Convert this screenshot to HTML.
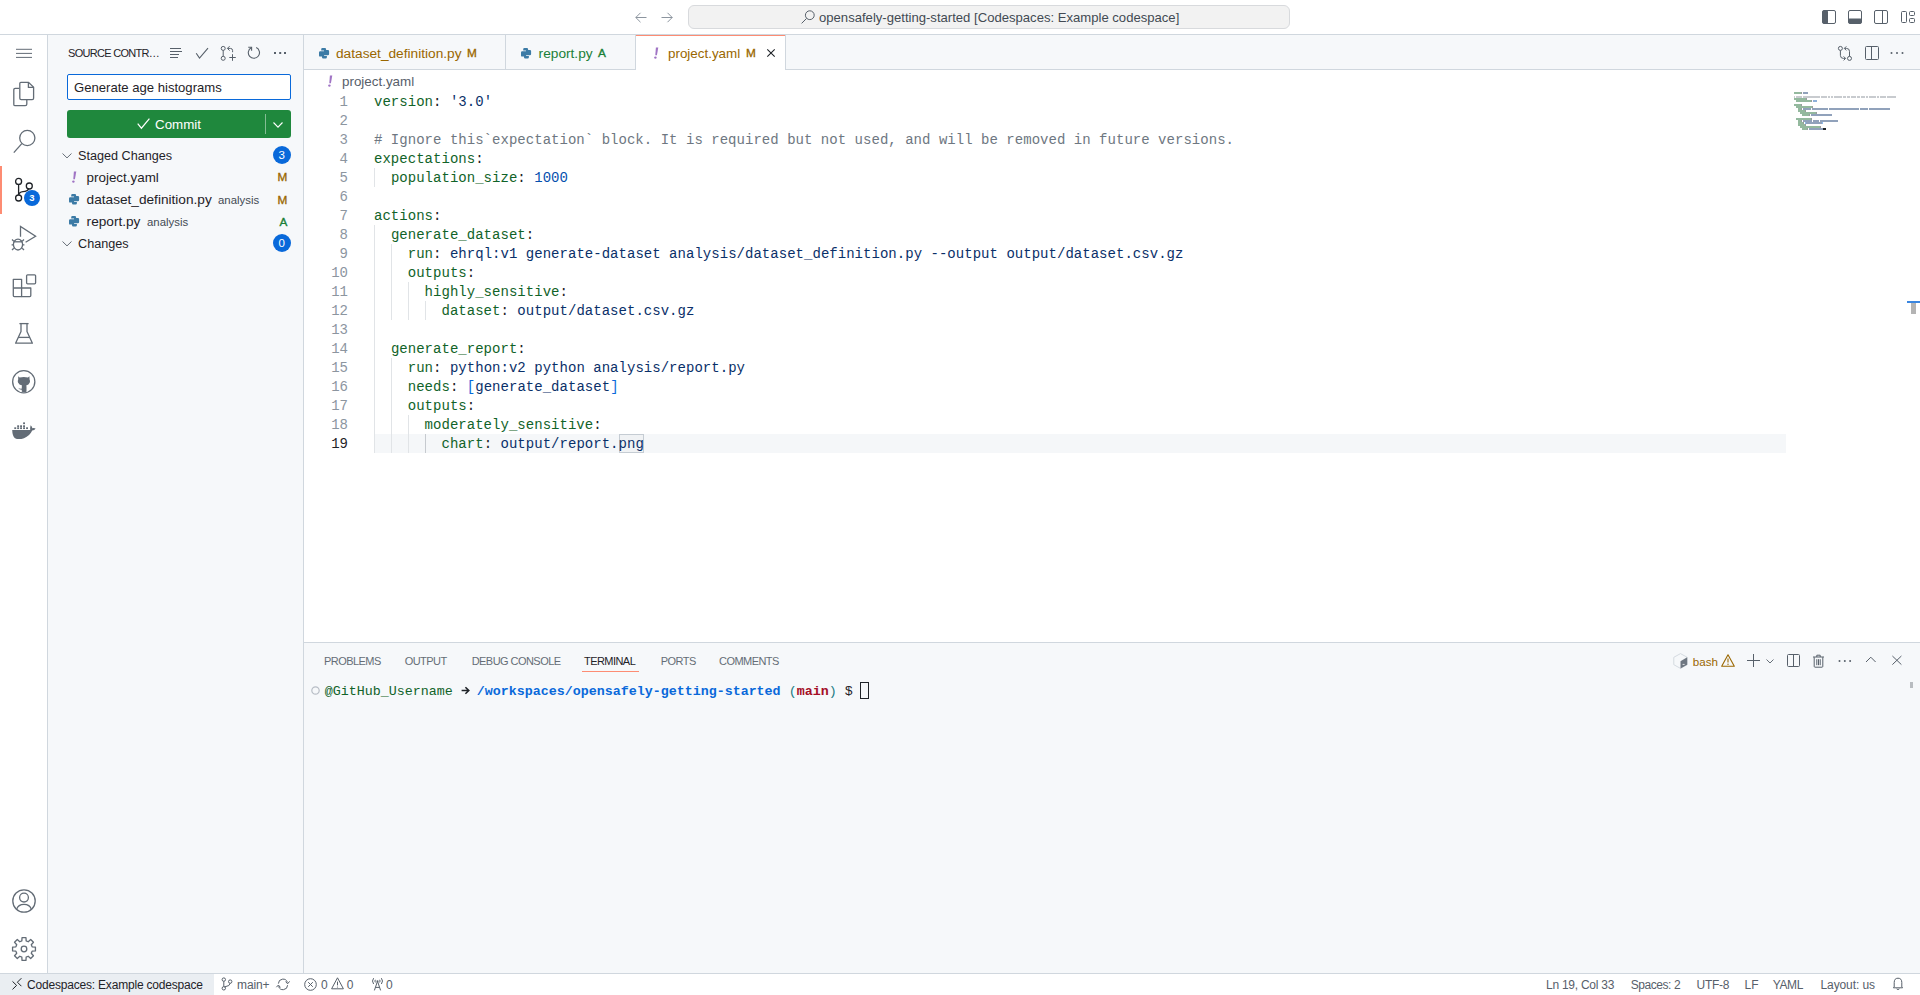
<!DOCTYPE html>
<html><head><meta charset="utf-8">
<style>
*{box-sizing:border-box;margin:0;padding:0}
html,body{width:1920px;height:995px;overflow:hidden;background:#fff;font-family:"Liberation Sans",sans-serif;color:#1f2328}
.a{position:absolute}
.t{position:absolute;white-space:pre;line-height:1}
svg{position:absolute;overflow:visible}
.ln{position:absolute;left:304px;width:44px;text-align:right;font-family:"Liberation Mono",monospace;font-size:14px;line-height:19px;color:#8c959f;white-space:pre}
.cl{position:absolute;left:374px;letter-spacing:0.03px;font-family:"Liberation Mono",monospace;font-size:14px;line-height:19px;color:#1f2328;white-space:pre}
.k{color:#116329}.s{color:#0a3069}.c{color:#6e7781}.n{color:#0550ae}.b{color:#0969da}
</style></head><body>
<!-- TITLE BAR -->
<div class="a" style="left:0px;top:0px;width:1920px;height:35px;background:#fff;border-bottom:1px solid #d0d7de"></div>
<svg style="left:635px;top:12px;" width="12" height="11" viewBox="0 0 12 11"><path d="M11.5 5.5H0.8M5.5 0.8L0.8 5.5L5.5 10.2" fill="none" stroke="#8c959f" stroke-width="1"/></svg>
<svg style="left:661px;top:12px;" width="12" height="11" viewBox="0 0 12 11"><path d="M0.5 5.5H11.2M6.5 0.8L11.2 5.5L6.5 10.2" fill="none" stroke="#8c959f" stroke-width="1"/></svg>
<div class="a" style="left:688px;top:5px;width:602px;height:24px;background:#f2f2f2;border:1px solid #d8dadd;border-radius:6px"></div>
<svg style="left:801px;top:10px;" width="14" height="14" viewBox="0 0 14 14"><g fill="none" stroke="#57606a" stroke-width="1"><circle cx="8.8" cy="5.2" r="4.4"/><path d="M5.6 8.4L0.6 13.4"/></g></svg>
<div class="t" style="left:819px;top:10.51px;font-size:13.1px;color:#424a53;font-weight:400;font-family:'Liberation Sans',sans-serif;">opensafely-getting-started [Codespaces: Example codespace]</div>
<svg style="left:1822px;top:10px;" width="14" height="14" viewBox="0 0 14 14"><rect x="0.5" y="0.5" width="13" height="13" rx="1.5" fill="none" stroke="#57606a"/><rect x="0.5" y="0.5" width="5.5" height="13" rx="1" fill="#57606a"/></svg>
<svg style="left:1848px;top:10px;" width="14" height="14" viewBox="0 0 14 14"><rect x="0.5" y="0.5" width="13" height="13" rx="1.5" fill="none" stroke="#57606a"/><rect x="0.5" y="8.5" width="13" height="5" rx="1" fill="#57606a"/></svg>
<svg style="left:1874px;top:10px;" width="14" height="14" viewBox="0 0 14 14"><rect x="0.5" y="0.5" width="13" height="13" rx="1.5" fill="none" stroke="#57606a"/><path d="M8.5 0.5V13.5" stroke="#57606a"/></svg>
<svg style="left:1901px;top:11px;" width="14" height="12" viewBox="0 0 14 12"><g fill="none" stroke="#57606a"><rect x="0.5" y="0.5" width="5" height="11" rx="1"/><rect x="8.5" y="0.5" width="5" height="4" rx="1"/><rect x="8.5" y="7.5" width="5" height="4" rx="1"/></g></svg>
<!-- ACTIVITY BAR -->
<div class="a" style="left:0px;top:35px;width:48px;height:938px;background:#fff;border-right:1px solid #d0d7de"></div>
<svg style="left:16px;top:48px;" width="16" height="11" viewBox="0 0 16 11"><g stroke="#636c76" stroke-width="1"><path d="M0 1.3H16M0 5.4H16M0 9.4H16"/></g></svg>
<svg style="left:12px;top:81px;" width="24" height="26" viewBox="0 0 24 26"><g fill="none" stroke="#636c76" stroke-width="1.3" stroke-linejoin="round"><path d="M7.2 7.4H3.2Q1.8 7.4 1.8 8.8V23.4Q1.8 24.6 3.2 24.6H13.2Q14.8 24.6 14.8 23.2V18.6"/><path d="M8.8 1.4H16.6L21.6 6.2V17.2Q21.6 18.6 20.2 18.6H9.2Q7.8 18.6 7.8 17.2V2.6Q7.8 1.4 8.8 1.4Z"/><path d="M16.4 1.6V6.4H21.4"/></g></svg>
<svg style="left:12px;top:128px;" width="26" height="27" viewBox="0 0 26 27"><g fill="none" stroke="#636c76" stroke-width="1.3"><circle cx="15.3" cy="10" r="7.6"/><path d="M9.8 15.6L1.8 24.6"/></g></svg>
<div class="a" style="left:0px;top:166px;width:2px;height:48px;background:#fd8c73"></div>
<svg style="left:12px;top:174px;" width="24" height="30" viewBox="0 0 24 30"><g fill="none" stroke="#1f2328" stroke-width="1.3"><circle cx="6.6" cy="7.4" r="3"/><circle cx="17.3" cy="12" r="3"/><circle cx="6.6" cy="24" r="3"/><path d="M6.6 10.4V21"/><path d="M6.6 21Q7 18 11 17.6Q15.6 17.2 16.6 15"/></g></svg>
<div class="a" style="left:24px;top:190px;width:16px;height:16px;background:#0969da;border-radius:8px"></div>
<div class="t" style="left:29.2px;top:193.26px;font-size:9.5px;color:#fff;font-weight:700;font-family:'Liberation Sans',sans-serif;">3</div>
<svg style="left:11px;top:225px;" width="26" height="27" viewBox="0 0 26 27"><g fill="none" stroke="#636c76" stroke-width="1.3" stroke-linejoin="miter"><path d="M9.5 11.8V1.4L24.6 11.2L14.6 17.2"/><ellipse cx="7" cy="19.6" rx="4.6" ry="5.4"/><path d="M2.6 16.8H11.4"/><path d="M1 14.6L2.8 16.2M13 14.6L11.2 16.2M0.6 19.8H2.4M11.6 19.8H13.4M1 25L2.8 23.2M13 25L11.2 23.2"/></g></svg>
<svg style="left:12px;top:274px;" width="24" height="24" viewBox="0 0 24 24"><g fill="none" stroke="#636c76" stroke-width="1.3" stroke-linejoin="round"><path d="M1.3 5.3H9.6V22.6H2.3Q1.3 22.6 1.3 21.6Z"/><path d="M1.3 14H18.8V21.6Q18.8 22.6 17.8 22.6H9.6"/><rect x="14.6" y="0.8" width="9" height="9" rx="1"/></g></svg>
<svg style="left:14px;top:322px;" width="20" height="22" viewBox="0 0 20 22"><g fill="none" stroke="#636c76" stroke-width="1.3" stroke-linejoin="round"><path d="M5.4 1.6H14.6"/><path d="M7 1.6V9.4L1.6 21.2H18.4L13 9.4V1.6"/><path d="M4 15.4H16"/></g></svg>
<svg style="left:0px;top:0px;" width="1" height="1" viewBox="0 0 1 1"><circle cx="23.75" cy="381.75" r="11.1" fill="none" stroke="#636c76" stroke-width="1.3"/><path fill="#636c76" d="M18.2 376.2L19.6 377.4Q23.8 376.8 28 377.4L29.4 376.2L29.6 379.6Q30.4 381 29.8 382.6Q28.8 385 26.2 385.4Q26.5 385.8 26.5 387V391.8Q24.2 392.4 21.8 391.8V389.8Q19.2 390 18.2 387.8Q19.4 388.8 21.8 388.6V387Q21.8 385.8 22.1 385.4Q19 385 18 382.6Q17.4 381 18.2 379.6Z"/></svg>
<svg style="left:0px;top:0px;" width="1" height="1" viewBox="0 0 1 1"><g fill="#636c76"><path d="M12.2 430.1H30.2Q30 427.5 30.6 425.3Q32 426.5 32.4 428.2Q34.4 427.8 35.6 428.6Q34.6 430.4 32.2 430.6Q29.8 436 24 438.2Q18.6 440 15 438.2Q12.4 436.4 12.2 430.1Z"/><rect x="14.3" y="427.3" width="1.9" height="1.75"/><rect x="17.2" y="427.3" width="1.9" height="1.75"/><rect x="20.1" y="427.3" width="1.9" height="1.75"/><rect x="23.1" y="427.3" width="1.9" height="1.75"/><rect x="26.1" y="427.3" width="1.9" height="1.75"/><rect x="17.2" y="425.3" width="1.9" height="1.75"/><rect x="20.1" y="425.3" width="1.9" height="1.75"/><rect x="23.1" y="425.3" width="1.9" height="1.75"/><rect x="23.1" y="422.4" width="1.9" height="1.75"/></g></svg>
<svg style="left:12px;top:889px;" width="24" height="24" viewBox="0 0 24 24"><g fill="none" stroke="#636c76" stroke-width="1.3"><circle cx="12" cy="12" r="11.2"/><circle cx="12" cy="8.6" r="4.4"/><path d="M4.6 20.4Q6.2 15.4 12 15.4Q17.8 15.4 19.4 20.4"/></g></svg>
<svg style="left:12px;top:937px;" width="24" height="24" viewBox="0 0 24 24"><g fill="none" stroke="#636c76" stroke-width="1.3" stroke-linejoin="round"><path d="M9.84 3.88L10.04 0.57L13.96 0.57L14.16 3.88L16.21 4.73L18.70 2.53L21.47 5.30L19.27 7.79L20.12 9.84L23.43 10.04L23.43 13.96L20.12 14.16L19.27 16.21L21.47 18.70L18.70 21.47L16.21 19.27L14.16 20.12L13.96 23.43L10.04 23.43L9.84 20.12L7.79 19.27L5.30 21.47L2.53 18.70L4.73 16.21L3.88 14.16L0.57 13.96L0.57 10.04L3.88 9.84L4.73 7.79L2.53 5.30L5.30 2.53L7.79 4.73Z"/><circle cx="12" cy="12" r="2.8"/></g></svg>
<!-- SIDEBAR -->
<div class="a" style="left:48px;top:35px;width:256px;height:938px;background:#f6f8fa;border-right:1px solid #d0d7de"></div>
<div class="t" style="left:68px;top:47.89px;font-size:11px;color:#1f2328;font-weight:400;font-family:'Liberation Sans',sans-serif;letter-spacing:-0.7px">SOURCE CONTR…</div>
<svg style="left:0px;top:0px;" width="1" height="1" viewBox="0 0 1 1"><g stroke="#57606a" stroke-width="1.1"><path d="M170 48.5H181M170 51.5H182M170 54.5H179M170 57.5H178"/></g></svg>
<svg style="left:0px;top:0px;" width="1" height="1" viewBox="0 0 1 1"><path d="M196.2 53.2L199.5 58L208 48.1" fill="none" stroke="#57606a" stroke-width="1.1"/></svg>
<svg style="left:0px;top:0px;" width="1" height="1" viewBox="0 0 1 1"><g fill="none" stroke="#57606a" stroke-width="1"><circle cx="223.2" cy="48.4" r="2"/><circle cx="223.2" cy="58.3" r="2"/><path d="M223.2 50.4V56.3"/><path d="M232.6 52.2V50.6Q232.6 48.4 230.4 48.4H227.6M229.6 46.2L227.4 48.4L229.6 50.6"/><path d="M229.3 57.5H235.8M232.5 54.2V60.8"/></g></svg>
<svg style="left:0px;top:0px;" width="1" height="1" viewBox="0 0 1 1"><g fill="none" stroke="#57606a" stroke-width="1.1"><path d="M256.2 47.6A5.6 5.6 0 1 1 251.2 47.8"/><path d="M248.2 47.3H251.6V50.7"/></g></svg>
<svg style="left:0px;top:0px;" width="1" height="1" viewBox="0 0 1 1"><g fill="#57606a"><rect x="274" y="52" width="2" height="2"/><rect x="279.2" y="52" width="2" height="2"/><rect x="284" y="52" width="2" height="2"/></g></svg>
<div class="a" style="left:67px;top:74px;width:224px;height:26px;background:#fff;border:1px solid #0969da;border-radius:2px"></div>
<div class="t" style="left:74px;top:81.11px;font-size:13.1px;color:#1f2328;font-weight:400;font-family:'Liberation Sans',sans-serif;">Generate age histograms</div>
<div class="a" style="left:67px;top:110px;width:224px;height:28px;background:#1f883d;border-radius:3px"></div>
<svg style="left:137px;top:118px;" width="13" height="11" viewBox="0 0 13 11"><path d="M0.7 5.6L4.4 10.2L12.4 0.6" fill="none" stroke="#fff" stroke-width="1.2"/></svg>
<div class="t" style="left:155px;top:118.10px;font-size:13.35px;color:#fff;font-weight:400;font-family:'Liberation Sans',sans-serif;">Commit</div>
<div class="a" style="left:265px;top:114px;width:1px;height:20px;background:rgba(255,255,255,0.45)"></div>
<svg style="left:273px;top:121.8px;" width="10" height="5.6" viewBox="0 0 10 5.6"><path d="M0.5 0.5L5.0 5.1L9.5 0.5" fill="none" stroke="#fff" stroke-width="1.1"/></svg>
<svg style="left:62px;top:152.6px;" width="10" height="5.4" viewBox="0 0 10 5.4"><path d="M0.5 0.5L5.0 4.9L9.5 0.5" fill="none" stroke="#656d76" stroke-width="1"/></svg>
<div class="t" style="left:78px;top:150.29px;font-size:12.65px;color:#1f2328;font-weight:400;font-family:'Liberation Sans',sans-serif;">Staged Changes</div>
<div class="a" style="left:273px;top:146px;width:18px;height:18px;background:#0969da;border-radius:9px"></div>
<div class="t" style="left:278.6px;top:149.67px;font-size:11.5px;color:#fff;font-weight:400;font-family:'Liberation Sans',sans-serif;">3</div>
<svg style="left:70.6px;top:171px;" width="6" height="12" viewBox="0 0 6 12"><path d="M2.9 0.4H5.3L3.9 8.2H2.3Z" fill="#a074c4"/><circle cx="2.4" cy="10.6" r="1.2" fill="#a074c4"/></svg>
<div class="t" style="left:86.6px;top:171.26px;font-size:13.4px;color:#1f2328;font-weight:400;font-family:'Liberation Sans',sans-serif;">project.yaml</div>
<div class="t" style="left:277.5px;top:172.41px;font-size:11.8px;color:#9a6700;font-weight:400;font-family:'Liberation Sans',sans-serif;-webkit-text-stroke:0.35px #9a6700">M</div>
<svg style="left:69px;top:193.8px;" width="10.1" height="10.5" viewBox="0 0 10.1 10.5"><g fill="#3c7ba6"><path d="M3.4 0H5.9Q7.1 0 7.1 1.2V5.6Q7.1 6.6 6.1 6.6H4Q3.1 6.6 3.1 7.6V8.6H1.1Q0 8.6 0 7.4V4.4Q0 3.2 1.2 3.2H5V2.5H2.2V1.2Q2.2 0 3.4 0Z"/><path d="M3.4 0H5.9Q7.1 0 7.1 1.2V5.6Q7.1 6.6 6.1 6.6H4Q3.1 6.6 3.1 7.6V8.6H1.1Q0 8.6 0 7.4V4.4Q0 3.2 1.2 3.2H5V2.5H2.2V1.2Q2.2 0 3.4 0Z" transform="rotate(180 5.05 5.25)"/></g></svg>
<div class="t" style="left:86.6px;top:193.25px;font-size:13.65px;color:#1f2328;font-weight:400;font-family:'Liberation Sans',sans-serif;">dataset_definition.py</div>
<div class="t" style="left:218px;top:195.15px;font-size:11.4px;color:#424a53;font-weight:400;font-family:'Liberation Sans',sans-serif;">analysis</div>
<div class="t" style="left:277.5px;top:194.61px;font-size:11.8px;color:#9a6700;font-weight:400;font-family:'Liberation Sans',sans-serif;-webkit-text-stroke:0.35px #9a6700">M</div>
<svg style="left:69px;top:215.8px;" width="10.1" height="10.5" viewBox="0 0 10.1 10.5"><g fill="#3c7ba6"><path d="M3.4 0H5.9Q7.1 0 7.1 1.2V5.6Q7.1 6.6 6.1 6.6H4Q3.1 6.6 3.1 7.6V8.6H1.1Q0 8.6 0 7.4V4.4Q0 3.2 1.2 3.2H5V2.5H2.2V1.2Q2.2 0 3.4 0Z"/><path d="M3.4 0H5.9Q7.1 0 7.1 1.2V5.6Q7.1 6.6 6.1 6.6H4Q3.1 6.6 3.1 7.6V8.6H1.1Q0 8.6 0 7.4V4.4Q0 3.2 1.2 3.2H5V2.5H2.2V1.2Q2.2 0 3.4 0Z" transform="rotate(180 5.05 5.25)"/></g></svg>
<div class="t" style="left:86.6px;top:215.25px;font-size:13.65px;color:#1f2328;font-weight:400;font-family:'Liberation Sans',sans-serif;">report.py</div>
<div class="t" style="left:147px;top:217.15px;font-size:11.4px;color:#424a53;font-weight:400;font-family:'Liberation Sans',sans-serif;">analysis</div>
<div class="t" style="left:279.5px;top:216.61px;font-size:11.8px;color:#1a7f37;font-weight:400;font-family:'Liberation Sans',sans-serif;-webkit-text-stroke:0.35px #1a7f37">A</div>
<svg style="left:62px;top:240.6px;" width="10" height="5.4" viewBox="0 0 10 5.4"><path d="M0.5 0.5L5.0 4.9L9.5 0.5" fill="none" stroke="#656d76" stroke-width="1"/></svg>
<div class="t" style="left:78px;top:238.29px;font-size:12.65px;color:#1f2328;font-weight:400;font-family:'Liberation Sans',sans-serif;">Changes</div>
<div class="a" style="left:273px;top:234px;width:18px;height:18px;background:#0969da;border-radius:9px"></div>
<div class="t" style="left:278.6px;top:237.67px;font-size:11.5px;color:#fff;font-weight:400;font-family:'Liberation Sans',sans-serif;">0</div>
<!-- EDITOR -->
<div class="a" style="left:304px;top:35px;width:1616px;height:35px;background:#f6f8fa;border-bottom:1px solid #d0d7de"></div>
<div class="a" style="left:505px;top:35px;width:1px;height:34px;background:#d0d7de"></div>
<div class="a" style="left:635px;top:35px;width:1px;height:35px;background:#d0d7de"></div>
<div class="a" style="left:785px;top:35px;width:1px;height:34px;background:#d0d7de"></div>
<div class="a" style="left:636px;top:35px;width:149px;height:35px;background:#fff"></div>
<div class="a" style="left:636px;top:35px;width:149px;height:1px;background:#fd8c73"></div>
<svg style="left:319px;top:48px;" width="10.1" height="10.5" viewBox="0 0 10.1 10.5"><g fill="#3c7ba6"><path d="M3.4 0H5.9Q7.1 0 7.1 1.2V5.6Q7.1 6.6 6.1 6.6H4Q3.1 6.6 3.1 7.6V8.6H1.1Q0 8.6 0 7.4V4.4Q0 3.2 1.2 3.2H5V2.5H2.2V1.2Q2.2 0 3.4 0Z"/><path d="M3.4 0H5.9Q7.1 0 7.1 1.2V5.6Q7.1 6.6 6.1 6.6H4Q3.1 6.6 3.1 7.6V8.6H1.1Q0 8.6 0 7.4V4.4Q0 3.2 1.2 3.2H5V2.5H2.2V1.2Q2.2 0 3.4 0Z" transform="rotate(180 5.05 5.25)"/></g></svg>
<div class="t" style="left:336px;top:47.00px;font-size:13.7px;color:#9a6700;font-weight:400;font-family:'Liberation Sans',sans-serif;">dataset_definition.py</div>
<div class="t" style="left:467px;top:48.21px;font-size:11.8px;color:#9a6700;font-weight:400;font-family:'Liberation Sans',sans-serif;-webkit-text-stroke:0.35px #9a6700">M</div>
<svg style="left:521px;top:48px;" width="10.1" height="10.5" viewBox="0 0 10.1 10.5"><g fill="#3c7ba6"><path d="M3.4 0H5.9Q7.1 0 7.1 1.2V5.6Q7.1 6.6 6.1 6.6H4Q3.1 6.6 3.1 7.6V8.6H1.1Q0 8.6 0 7.4V4.4Q0 3.2 1.2 3.2H5V2.5H2.2V1.2Q2.2 0 3.4 0Z"/><path d="M3.4 0H5.9Q7.1 0 7.1 1.2V5.6Q7.1 6.6 6.1 6.6H4Q3.1 6.6 3.1 7.6V8.6H1.1Q0 8.6 0 7.4V4.4Q0 3.2 1.2 3.2H5V2.5H2.2V1.2Q2.2 0 3.4 0Z" transform="rotate(180 5.05 5.25)"/></g></svg>
<div class="t" style="left:538.6px;top:47.00px;font-size:13.7px;color:#1a7f37;font-weight:400;font-family:'Liberation Sans',sans-serif;">report.py</div>
<div class="t" style="left:598px;top:48.21px;font-size:11.8px;color:#1a7f37;font-weight:400;font-family:'Liberation Sans',sans-serif;-webkit-text-stroke:0.35px #1a7f37">A</div>
<svg style="left:652.5px;top:47px;" width="6" height="12" viewBox="0 0 6 12"><path d="M2.9 0.4H5.3L3.9 8.2H2.3Z" fill="#a074c4"/><circle cx="2.4" cy="10.6" r="1.2" fill="#a074c4"/></svg>
<div class="t" style="left:668px;top:47.26px;font-size:13.4px;color:#9a6700;font-weight:400;font-family:'Liberation Sans',sans-serif;">project.yaml</div>
<div class="t" style="left:746px;top:48.21px;font-size:11.8px;color:#9a6700;font-weight:400;font-family:'Liberation Sans',sans-serif;-webkit-text-stroke:0.35px #9a6700">M</div>
<svg style="left:767px;top:49px;" width="8" height="8" viewBox="0 0 8 8"><path d="M0.3 0.3L7.7 7.7M7.7 0.3L0.3 7.7" stroke="#1f2328" stroke-width="1.1"/></svg>
<svg style="left:327px;top:75.4px;" width="6" height="12" viewBox="0 0 6 12"><path d="M2.9 0.4H5.3L3.9 8.2H2.3Z" fill="#a074c4"/><circle cx="2.4" cy="10.6" r="1.2" fill="#a074c4"/></svg>
<div class="t" style="left:342px;top:74.96px;font-size:13.4px;color:#57606a;font-weight:400;font-family:'Liberation Sans',sans-serif;">project.yaml</div>
<svg style="left:1837px;top:45px;" width="16" height="16" viewBox="0 0 16 16"><g fill="none" stroke="#57606a" stroke-width="1"><circle cx="3.4" cy="3.4" r="2"/><circle cx="12.5" cy="13.4" r="2"/><path d="M3.4 5.4V10.4Q3.4 13.4 6.4 13.4H8.4M6.6 11.4L8.6 13.4L6.6 15.4"/><path d="M12.5 11.4V6.4Q12.5 3.4 9.5 3.4H7.5M9.3 1.4L7.3 3.4L9.3 5.4"/></g></svg>
<svg style="left:1865px;top:46px;" width="14" height="14" viewBox="0 0 14 14"><g fill="none" stroke="#57606a" stroke-width="1"><rect x="0.5" y="0.5" width="13" height="13" rx="1"/><path d="M6.5 0.5V13.5"/></g></svg>
<svg style="left:1890px;top:51px;" width="14" height="4" viewBox="0 0 14 4"><g fill="#57606a"><circle cx="1.5" cy="2" r="1"/><circle cx="7" cy="2" r="1"/><circle cx="12.5" cy="2" r="1"/></g></svg>
<div class="a" style="left:374px;top:434px;width:1412px;height:19px;background:#f5f7f9"></div>
<div class="a" style="left:619px;top:434px;width:25px;height:19px;border:1px solid #c5ccd3;background:#f0f2f4"></div>
<div class="a" style="left:374px;top:168px;width:1px;height:19px;background:#e1e4e7"></div>
<div class="a" style="left:374px;top:225px;width:1px;height:228px;background:#e1e4e7"></div>
<div class="a" style="left:391px;top:244px;width:1px;height:76px;background:#e1e4e7"></div>
<div class="a" style="left:391px;top:358px;width:1px;height:95px;background:#e1e4e7"></div>
<div class="a" style="left:408px;top:282px;width:1px;height:38px;background:#e1e4e7"></div>
<div class="a" style="left:408px;top:415px;width:1px;height:38px;background:#e1e4e7"></div>
<div class="a" style="left:425px;top:301px;width:1px;height:19px;background:#e1e4e7"></div>
<div class="a" style="left:425px;top:434px;width:1px;height:19px;background:#c6cacf"></div>
<div class="ln" style="top:93px;color:#8c959f">1</div>
<div class="cl" style="top:93px"><span class="k">version</span>: <span class="s">'3.0'</span></div>
<div class="ln" style="top:112px;color:#8c959f">2</div>
<div class="ln" style="top:131px;color:#8c959f">3</div>
<div class="cl" style="top:131px"><span class="c"># Ignore this`expectation` block. It is required but not used, and will be removed in future versions.</span></div>
<div class="ln" style="top:150px;color:#8c959f">4</div>
<div class="cl" style="top:150px"><span class="k">expectations</span>:</div>
<div class="ln" style="top:169px;color:#8c959f">5</div>
<div class="cl" style="top:169px">  <span class="k">population_size</span>: <span class="n">1000</span></div>
<div class="ln" style="top:188px;color:#8c959f">6</div>
<div class="ln" style="top:207px;color:#8c959f">7</div>
<div class="cl" style="top:207px"><span class="k">actions</span>:</div>
<div class="ln" style="top:226px;color:#8c959f">8</div>
<div class="cl" style="top:226px">  <span class="k">generate_dataset</span>:</div>
<div class="ln" style="top:245px;color:#8c959f">9</div>
<div class="cl" style="top:245px">    <span class="k">run</span>: <span class="s">ehrql:v1 generate-dataset analysis/dataset_definition.py --output output/dataset.csv.gz</span></div>
<div class="ln" style="top:264px;color:#8c959f">10</div>
<div class="cl" style="top:264px">    <span class="k">outputs</span>:</div>
<div class="ln" style="top:283px;color:#8c959f">11</div>
<div class="cl" style="top:283px">      <span class="k">highly_sensitive</span>:</div>
<div class="ln" style="top:302px;color:#8c959f">12</div>
<div class="cl" style="top:302px">        <span class="k">dataset</span>: <span class="s">output/dataset.csv.gz</span></div>
<div class="ln" style="top:321px;color:#8c959f">13</div>
<div class="ln" style="top:340px;color:#8c959f">14</div>
<div class="cl" style="top:340px">  <span class="k">generate_report</span>:</div>
<div class="ln" style="top:359px;color:#8c959f">15</div>
<div class="cl" style="top:359px">    <span class="k">run</span>: <span class="s">python:v2 python analysis/report.py</span></div>
<div class="ln" style="top:378px;color:#8c959f">16</div>
<div class="cl" style="top:378px">    <span class="k">needs</span>: <span class="b">[</span><span class="s">generate_dataset</span><span class="b">]</span></div>
<div class="ln" style="top:397px;color:#8c959f">17</div>
<div class="cl" style="top:397px">    <span class="k">outputs</span>:</div>
<div class="ln" style="top:416px;color:#8c959f">18</div>
<div class="cl" style="top:416px">      <span class="k">moderately_sensitive</span>:</div>
<div class="ln" style="top:435px;color:#1f2328">19</div>
<div class="cl" style="top:435px">        <span class="k">chart</span>: <span class="s">output/report.png</span></div>
<div class="a" style="left:1794px;top:92px;width:7px;height:1.6px;background:#116329;opacity:0.45"></div>
<div class="a" style="left:1801px;top:92px;width:1px;height:1.6px;background:#1f2328;opacity:0.45"></div>
<div class="a" style="left:1803px;top:92px;width:5px;height:1.6px;background:#0a3069;opacity:0.45"></div>
<div class="a" style="left:1794px;top:96px;width:1px;height:1.6px;background:#6e7781;opacity:0.38"></div>
<div class="a" style="left:1796px;top:96px;width:6px;height:1.6px;background:#6e7781;opacity:0.38"></div>
<div class="a" style="left:1803px;top:96px;width:17px;height:1.6px;background:#6e7781;opacity:0.38"></div>
<div class="a" style="left:1821px;top:96px;width:6px;height:1.6px;background:#6e7781;opacity:0.38"></div>
<div class="a" style="left:1828px;top:96px;width:2px;height:1.6px;background:#6e7781;opacity:0.38"></div>
<div class="a" style="left:1831px;top:96px;width:2px;height:1.6px;background:#6e7781;opacity:0.38"></div>
<div class="a" style="left:1834px;top:96px;width:8px;height:1.6px;background:#6e7781;opacity:0.38"></div>
<div class="a" style="left:1843px;top:96px;width:3px;height:1.6px;background:#6e7781;opacity:0.38"></div>
<div class="a" style="left:1847px;top:96px;width:3px;height:1.6px;background:#6e7781;opacity:0.38"></div>
<div class="a" style="left:1851px;top:96px;width:5px;height:1.6px;background:#6e7781;opacity:0.38"></div>
<div class="a" style="left:1857px;top:96px;width:3px;height:1.6px;background:#6e7781;opacity:0.38"></div>
<div class="a" style="left:1861px;top:96px;width:4px;height:1.6px;background:#6e7781;opacity:0.38"></div>
<div class="a" style="left:1866px;top:96px;width:2px;height:1.6px;background:#6e7781;opacity:0.38"></div>
<div class="a" style="left:1869px;top:96px;width:7px;height:1.6px;background:#6e7781;opacity:0.38"></div>
<div class="a" style="left:1877px;top:96px;width:2px;height:1.6px;background:#6e7781;opacity:0.38"></div>
<div class="a" style="left:1880px;top:96px;width:6px;height:1.6px;background:#6e7781;opacity:0.38"></div>
<div class="a" style="left:1887px;top:96px;width:9px;height:1.6px;background:#6e7781;opacity:0.38"></div>
<div class="a" style="left:1794px;top:98px;width:12px;height:1.6px;background:#116329;opacity:0.45"></div>
<div class="a" style="left:1806px;top:98px;width:1px;height:1.6px;background:#1f2328;opacity:0.45"></div>
<div class="a" style="left:1796px;top:100px;width:15px;height:1.6px;background:#116329;opacity:0.45"></div>
<div class="a" style="left:1811px;top:100px;width:1px;height:1.6px;background:#1f2328;opacity:0.45"></div>
<div class="a" style="left:1813px;top:100px;width:4px;height:1.6px;background:#0550ae;opacity:0.45"></div>
<div class="a" style="left:1794px;top:104px;width:7px;height:1.6px;background:#116329;opacity:0.45"></div>
<div class="a" style="left:1801px;top:104px;width:1px;height:1.6px;background:#1f2328;opacity:0.45"></div>
<div class="a" style="left:1796px;top:106px;width:16px;height:1.6px;background:#116329;opacity:0.45"></div>
<div class="a" style="left:1812px;top:106px;width:1px;height:1.6px;background:#1f2328;opacity:0.45"></div>
<div class="a" style="left:1798px;top:108px;width:3px;height:1.6px;background:#116329;opacity:0.45"></div>
<div class="a" style="left:1801px;top:108px;width:1px;height:1.6px;background:#1f2328;opacity:0.45"></div>
<div class="a" style="left:1803px;top:108px;width:8px;height:1.6px;background:#0a3069;opacity:0.45"></div>
<div class="a" style="left:1812px;top:108px;width:16px;height:1.6px;background:#0a3069;opacity:0.45"></div>
<div class="a" style="left:1829px;top:108px;width:30px;height:1.6px;background:#0a3069;opacity:0.45"></div>
<div class="a" style="left:1860px;top:108px;width:8px;height:1.6px;background:#0a3069;opacity:0.45"></div>
<div class="a" style="left:1869px;top:108px;width:21px;height:1.6px;background:#0a3069;opacity:0.45"></div>
<div class="a" style="left:1798px;top:110px;width:7px;height:1.6px;background:#116329;opacity:0.45"></div>
<div class="a" style="left:1805px;top:110px;width:1px;height:1.6px;background:#1f2328;opacity:0.45"></div>
<div class="a" style="left:1800px;top:112px;width:16px;height:1.6px;background:#116329;opacity:0.45"></div>
<div class="a" style="left:1816px;top:112px;width:1px;height:1.6px;background:#1f2328;opacity:0.45"></div>
<div class="a" style="left:1802px;top:114px;width:7px;height:1.6px;background:#116329;opacity:0.45"></div>
<div class="a" style="left:1809px;top:114px;width:1px;height:1.6px;background:#1f2328;opacity:0.45"></div>
<div class="a" style="left:1811px;top:114px;width:21px;height:1.6px;background:#0a3069;opacity:0.45"></div>
<div class="a" style="left:1796px;top:118px;width:15px;height:1.6px;background:#116329;opacity:0.45"></div>
<div class="a" style="left:1811px;top:118px;width:1px;height:1.6px;background:#1f2328;opacity:0.45"></div>
<div class="a" style="left:1798px;top:120px;width:3px;height:1.6px;background:#116329;opacity:0.45"></div>
<div class="a" style="left:1801px;top:120px;width:1px;height:1.6px;background:#1f2328;opacity:0.45"></div>
<div class="a" style="left:1803px;top:120px;width:9px;height:1.6px;background:#0a3069;opacity:0.45"></div>
<div class="a" style="left:1813px;top:120px;width:6px;height:1.6px;background:#0a3069;opacity:0.45"></div>
<div class="a" style="left:1820px;top:120px;width:18px;height:1.6px;background:#0a3069;opacity:0.45"></div>
<div class="a" style="left:1798px;top:122px;width:5px;height:1.6px;background:#116329;opacity:0.45"></div>
<div class="a" style="left:1803px;top:122px;width:1px;height:1.6px;background:#1f2328;opacity:0.45"></div>
<div class="a" style="left:1805px;top:122px;width:1px;height:1.6px;background:#0969da;opacity:0.45"></div>
<div class="a" style="left:1806px;top:122px;width:16px;height:1.6px;background:#0a3069;opacity:0.45"></div>
<div class="a" style="left:1822px;top:122px;width:1px;height:1.6px;background:#0969da;opacity:0.45"></div>
<div class="a" style="left:1798px;top:124px;width:7px;height:1.6px;background:#116329;opacity:0.45"></div>
<div class="a" style="left:1805px;top:124px;width:1px;height:1.6px;background:#1f2328;opacity:0.45"></div>
<div class="a" style="left:1800px;top:126px;width:20px;height:1.6px;background:#116329;opacity:0.45"></div>
<div class="a" style="left:1820px;top:126px;width:1px;height:1.6px;background:#1f2328;opacity:0.45"></div>
<div class="a" style="left:1802px;top:128px;width:5px;height:1.6px;background:#116329;opacity:0.45"></div>
<div class="a" style="left:1807px;top:128px;width:1px;height:1.6px;background:#1f2328;opacity:0.45"></div>
<div class="a" style="left:1809px;top:128px;width:17px;height:1.6px;background:#0a3069;opacity:0.45"></div>
<div class="a" style="left:1823px;top:128px;width:3px;height:2px;background:#1f2328"></div>
<div class="a" style="left:1907px;top:301px;width:13px;height:2px;background:#3a86e0"></div>
<div class="a" style="left:1911px;top:303px;width:5px;height:11px;background:#b4b4b4"></div>
<!-- PANEL -->
<div class="a" style="left:304px;top:642px;width:1616px;height:331px;background:#f6f8fa;border-top:1px solid #d0d7de"></div>
<div class="t" style="left:324px;top:655.69px;font-size:11px;color:#656d76;font-weight:400;font-family:'Liberation Sans',sans-serif;letter-spacing:-0.55px">PROBLEMS</div>
<div class="t" style="left:404.7px;top:655.69px;font-size:11px;color:#656d76;font-weight:400;font-family:'Liberation Sans',sans-serif;letter-spacing:-0.55px">OUTPUT</div>
<div class="t" style="left:471.7px;top:655.69px;font-size:11px;color:#656d76;font-weight:400;font-family:'Liberation Sans',sans-serif;letter-spacing:-0.55px">DEBUG CONSOLE</div>
<div class="t" style="left:584px;top:655.69px;font-size:11px;color:#1f2328;font-weight:400;font-family:'Liberation Sans',sans-serif;letter-spacing:-0.55px">TERMINAL</div>
<div class="t" style="left:660.8px;top:655.69px;font-size:11px;color:#656d76;font-weight:400;font-family:'Liberation Sans',sans-serif;letter-spacing:-0.55px">PORTS</div>
<div class="t" style="left:719px;top:655.69px;font-size:11px;color:#656d76;font-weight:400;font-family:'Liberation Sans',sans-serif;letter-spacing:-0.55px">COMMENTS</div>
<div class="a" style="left:582px;top:671px;width:57px;height:1px;background:#fd8c73"></div>
<svg style="left:1673px;top:653px;" width="15" height="16" viewBox="0 0 15 16"><path d="M7.5 0.6L14.2 4.3V11.7L7.5 15.4L0.8 11.7V4.3Z" fill="none" stroke="#d0d7de" stroke-width="0.9"/><path d="M7.5 15.4V8.2L14.2 4.3V11.7Z" fill="#6e7781"/><path d="M9.6 11.4H11.6" stroke="#fff" stroke-width="0.8"/></svg>
<div class="t" style="left:1692.8px;top:656.18px;font-size:11.6px;color:#9a6700;font-weight:400;font-family:'Liberation Sans',sans-serif;">bash</div>
<svg style="left:1721px;top:654px;" width="14" height="13" viewBox="0 0 14 13"><path d="M7 0.8L13.3 12.3H0.7Z" fill="none" stroke="#9a6700" stroke-width="1.1" stroke-linejoin="round"/><path d="M7 4.6V8.6" stroke="#9a6700" stroke-width="1.1"/><circle cx="7" cy="10.3" r="0.7" fill="#9a6700"/></svg>
<svg style="left:0px;top:0px;" width="1" height="1" viewBox="0 0 1 1"><path d="M1753.5 654V667M1747 660.5H1760" stroke="#57606a" stroke-width="1"/></svg>
<svg style="left:1766px;top:659px;" width="8" height="5" viewBox="0 0 8 5"><path d="M0.5 0.5L4 4L7.5 0.5" fill="none" stroke="#57606a" stroke-width="0.9"/></svg>
<svg style="left:0px;top:0px;" width="1" height="1" viewBox="0 0 1 1"><g fill="none" stroke="#57606a" stroke-width="1"><rect x="1787.5" y="654.5" width="12" height="12" rx="1"/><path d="M1793.5 654.5V666.5"/></g></svg>
<svg style="left:1813px;top:653.5px;" width="11" height="15" viewBox="0 0 11 15"><g fill="none" stroke="#57606a" stroke-width="1"><path d="M0 3H11M3.8 3V1.2H7.2V3"/><path d="M1.2 3.2V12.4Q1.2 13.2 2 13.2H9Q9.8 13.2 9.8 12.4V3.2"/><path d="M3.8 5.2V11.2M5.5 5.2V11.2M7.2 5.2V11.2"/></g></svg>
<svg style="left:1838px;top:659px;" width="14" height="4" viewBox="0 0 14 4"><g fill="#57606a"><circle cx="1.5" cy="2" r="1"/><circle cx="6.8" cy="2" r="1"/><circle cx="12.1" cy="2" r="1"/></g></svg>
<svg style="left:0px;top:0px;" width="1" height="1" viewBox="0 0 1 1"><path d="M1866 662L1870.8 657.2L1875.6 662" fill="none" stroke="#57606a" stroke-width="1"/></svg>
<svg style="left:0px;top:0px;" width="1" height="1" viewBox="0 0 1 1"><path d="M1892.4 656L1901.4 664.6M1901.4 656L1892.4 664.6" stroke="#57606a" stroke-width="1"/></svg>
<div class="a" style="left:1910px;top:682px;width:3px;height:6px;background:#b8bcc0"></div>
<svg style="left:311px;top:686px;" width="9" height="9" viewBox="0 0 9 9"><circle cx="4.5" cy="4.5" r="3.7" fill="none" stroke="#b8bec6" stroke-width="1.2"/></svg>
<div class="t" style="left:324.7px;top:684.78px;font-size:13.33px;color:#116329;font-weight:400;font-family:'Liberation Mono',monospace;">@GitHub_Username</div>
<svg style="left:461.2px;top:686px;" width="9" height="9" viewBox="0 0 9 9"><path d="M0.6 4.5H7.4M4.4 1.2L7.8 4.5L4.4 7.8" fill="none" stroke="#1f2328" stroke-width="1.6"/></svg>
<div class="t" style="left:476.7px;top:684.78px;font-size:13.33px;color:#0969da;font-weight:700;font-family:'Liberation Mono',monospace;">/workspaces/opensafely-getting-started</div>
<div class="t" style="left:788.7px;top:684.78px;font-size:13.33px;color:#1b7c83;font-weight:400;font-family:'Liberation Mono',monospace;">(</div>
<div class="t" style="left:796.7px;top:684.78px;font-size:13.33px;color:#a40e26;font-weight:700;font-family:'Liberation Mono',monospace;">main</div>
<div class="t" style="left:828.7px;top:684.78px;font-size:13.33px;color:#1b7c83;font-weight:400;font-family:'Liberation Mono',monospace;">)</div>
<div class="t" style="left:844.7px;top:684.78px;font-size:13.33px;color:#1f2328;font-weight:400;font-family:'Liberation Mono',monospace;">$</div>
<div class="a" style="left:860px;top:682px;width:9px;height:17px;border:1px solid #1f2328"></div>
<!-- STATUS BAR -->
<div class="a" style="left:0px;top:973px;width:1920px;height:22px;background:#fff;border-top:1px solid #d0d7de"></div>
<div class="a" style="left:0px;top:974px;width:214px;height:21px;background:#eaeef2"></div>
<svg style="left:12px;top:978px;" width="10" height="12" viewBox="0 0 10 12"><g fill="none" stroke="#1f2328" stroke-width="1"><path d="M0.5 3.4L4.6 7.4L0.5 11.4"/><path d="M9.4 0.2L5.4 4.2L9.4 8.2"/></g></svg>
<div class="t" style="left:27.1px;top:978.64px;font-size:12px;color:#1f2328;font-weight:400;font-family:'Liberation Sans',sans-serif;letter-spacing:-0.2px">Codespaces: Example codespace</div>
<svg style="left:0px;top:0px;" width="1" height="1" viewBox="0 0 1 1"><g fill="none" stroke="#57606a" stroke-width="1"><circle cx="223.8" cy="979.6" r="1.7"/><circle cx="223.8" cy="988.3" r="1.7"/><circle cx="230.2" cy="981.6" r="1.7"/><path d="M223.8 981.3V986.6"/><path d="M230.2 983.3Q230.2 986 224.6 986.9"/></g></svg>
<div class="t" style="left:237px;top:978.64px;font-size:12px;color:#57606a;font-weight:400;font-family:'Liberation Sans',sans-serif;letter-spacing:-0.1px">main+</div>
<svg style="left:0px;top:0px;" width="1" height="1" viewBox="0 0 1 1"><g fill="none" stroke="#57606a" stroke-width="1"><path d="M278.4 983.6A4.6 4.6 0 0 1 287.4 982.4"/><path d="M287.6 985.2A4.6 4.6 0 0 1 278.6 986.4"/><path d="M285.6 981.6L287.6 983.8L289.6 981.4"/><path d="M276.4 987.2L278.4 985L280.4 987.4"/></g></svg>
<svg style="left:304px;top:978px;" width="13" height="13" viewBox="0 0 13 13"><g fill="none" stroke="#57606a" stroke-width="1"><circle cx="6.5" cy="6.5" r="5.8"/><path d="M4.2 4.2L8.8 8.8M8.8 4.2L4.2 8.8"/></g></svg>
<div class="t" style="left:321px;top:978.64px;font-size:12px;color:#57606a;font-weight:400;font-family:'Liberation Sans',sans-serif;">0</div>
<svg style="left:331px;top:977px;" width="13" height="13" viewBox="0 0 13 13"><g fill="none" stroke="#57606a" stroke-width="1" stroke-linejoin="round"><path d="M6.5 0.8L12.4 11.8H0.6Z"/><path d="M6.5 4.6V8.4"/></g><circle cx="6.5" cy="10" r="0.6" fill="#57606a"/></svg>
<div class="t" style="left:346.7px;top:978.64px;font-size:12px;color:#57606a;font-weight:400;font-family:'Liberation Sans',sans-serif;">0</div>
<svg style="left:371px;top:977px;" width="13" height="14" viewBox="0 0 13 14"><g fill="none" stroke="#57606a" stroke-width="1"><path d="M2.6 1.2Q0.4 4 2.6 7M10.4 1.2Q12.6 4 10.4 7M4.4 2.8Q3.4 4 4.4 5.4M8.6 2.8Q9.6 4 8.6 5.4"/><path d="M6.5 4.2L3.4 13.4M6.5 4.2L9.6 13.4M4.4 10.4H8.6"/></g><circle cx="6.5" cy="4.2" r="1" fill="#57606a"/></svg>
<div class="t" style="left:386px;top:978.64px;font-size:12px;color:#57606a;font-weight:400;font-family:'Liberation Sans',sans-serif;">0</div>
<div class="t" style="left:1546px;top:978.64px;font-size:12px;color:#57606a;font-weight:400;font-family:'Liberation Sans',sans-serif;letter-spacing:-0.25px">Ln 19, Col 33</div>
<div class="t" style="left:1630.8px;top:978.64px;font-size:12px;color:#57606a;font-weight:400;font-family:'Liberation Sans',sans-serif;letter-spacing:-0.45px">Spaces: 2</div>
<div class="t" style="left:1696.6px;top:978.64px;font-size:12px;color:#57606a;font-weight:400;font-family:'Liberation Sans',sans-serif;letter-spacing:-0.3px">UTF-8</div>
<div class="t" style="left:1744.6px;top:978.64px;font-size:12px;color:#57606a;font-weight:400;font-family:'Liberation Sans',sans-serif;letter-spacing:0px">LF</div>
<div class="t" style="left:1772.8px;top:978.64px;font-size:12px;color:#57606a;font-weight:400;font-family:'Liberation Sans',sans-serif;letter-spacing:-0.4px">YAML</div>
<div class="t" style="left:1820.5px;top:978.64px;font-size:12px;color:#57606a;font-weight:400;font-family:'Liberation Sans',sans-serif;letter-spacing:-0.1px">Layout: us</div>
<svg style="left:1893px;top:977px;" width="10" height="13" viewBox="0 0 10 13"><g fill="none" stroke="#57606a" stroke-width="1" stroke-linejoin="round"><path d="M1.2 10V5.6Q1.2 1.2 5 1.2Q8.8 1.2 8.8 5.6V10L9.6 10.8H0.4Z"/><path d="M3.6 11.8Q5 13.4 6.4 11.8"/></g></svg>
</body></html>
